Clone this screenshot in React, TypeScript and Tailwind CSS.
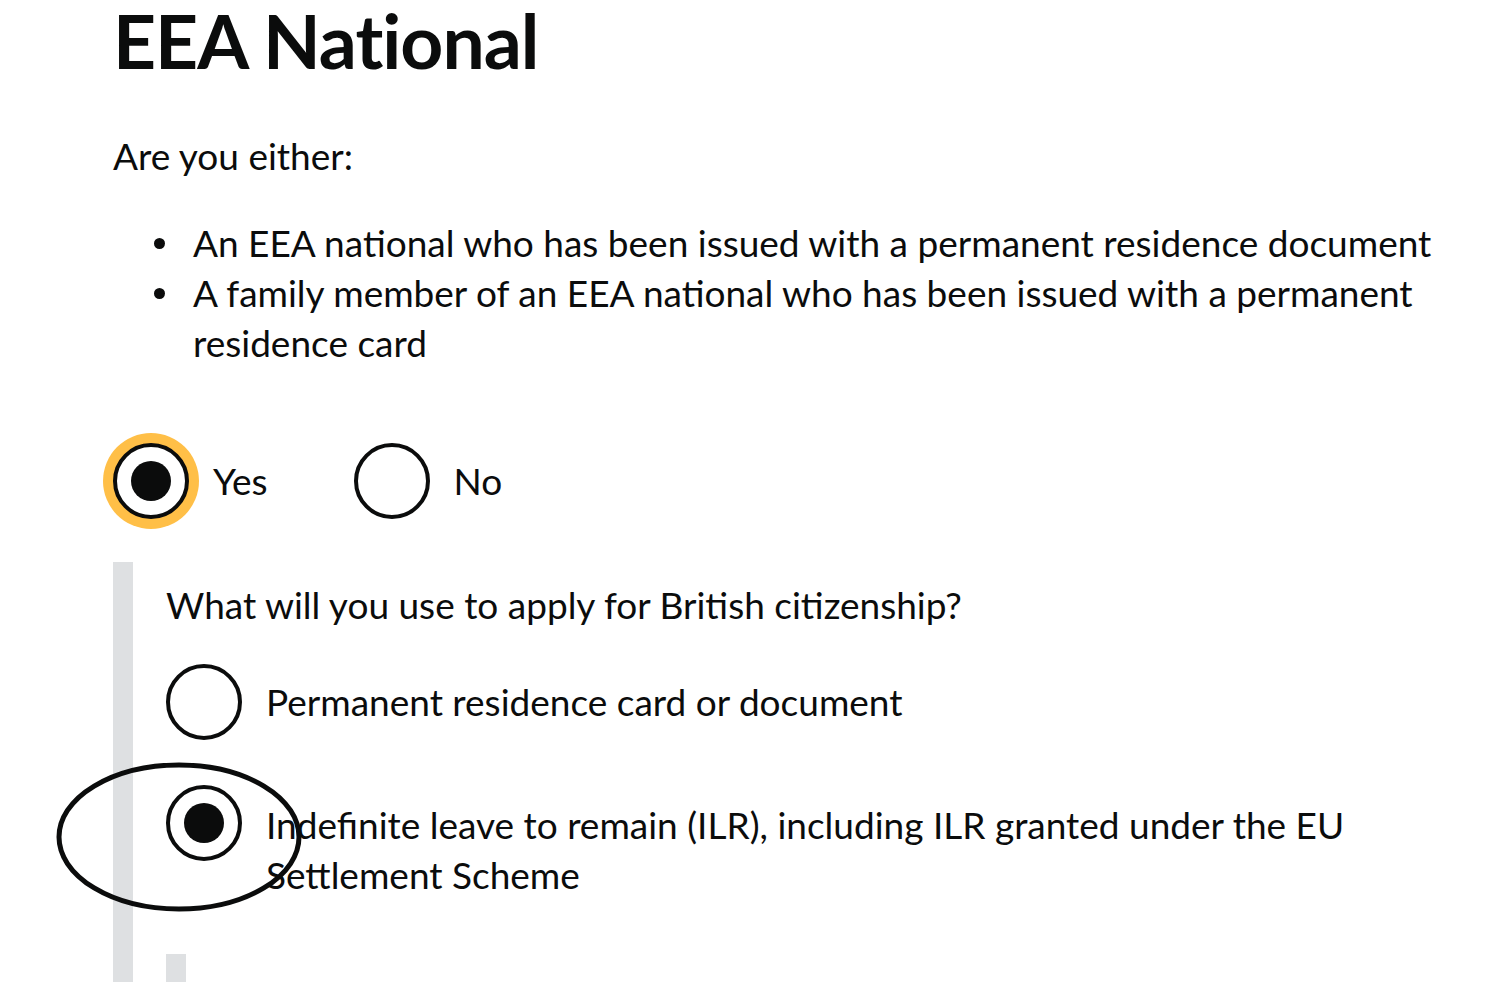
import React from 'react';

const font = { fontFamily: 'Lato, "Noto Sans", sans-serif' };

function Radio({ checked, focused }: { checked?: boolean; focused?: boolean }) {
  return (
    <span
      className={
        'relative flex h-[76px] w-[76px] shrink-0 items-center justify-center rounded-full border-[4px] border-[#0b0c0c] bg-white ' +
        (focused ? 'shadow-[0_0_0_10px_#ffbf47]' : '')
      }
    >
      {checked && <span className="h-[40px] w-[40px] rounded-full bg-[#0b0c0c]" />}
    </span>
  );
}

function Bullet({ children }: { children: React.ReactNode }) {
  return (
    <li className="flex">
      <span className="w-[80px] shrink-0">
        <span className="ml-[41px] mt-[20px] block h-[11px] w-[11px] rounded-full bg-[#0b0c0c]" />
      </span>
      <span>{children}</span>
    </li>
  );
}

export default function App() {
  return (
    <div className="h-[982px] overflow-hidden bg-white text-[#0b0c0c]" style={font}>
      <div className="pl-[113px] pr-[40px]">
        <h1 className="mt-[0px] text-[75px] font-bold leading-[80px] tracking-[-1px]">EEA National</h1>

        <p className="mt-[51px] text-[37px] leading-[50px]">Are you either:</p>

        <ul className="mt-[37px] text-[37px] leading-[50px]">
          <Bullet>An EEA national who has been issued with a permanent residence document</Bullet>
          <Bullet>A family member of an EEA national who has been issued with a permanent residence card</Bullet>
        </ul>

        <div className="mt-[75px] flex items-center">
          <label className="flex items-center">
            <Radio checked focused />
            <span className="ml-[24px] text-[37px]">Yes</span>
          </label>
          <label className="ml-[86px] flex items-center">
            <Radio />
            <span className="ml-[24px] text-[37px]">No</span>
          </label>
        </div>

        <div className="mt-[43px] border-l-[20px] border-[#dee0e2] pl-[33px] pt-[18px] pb-[40px]">
          <p className="text-[37px] leading-[50px]">What will you use to apply for British citizenship?</p>

          <div className="mt-[34px] flex items-center">
            <Radio />
            <span className="ml-[24px] text-[37px] leading-[50px]">Permanent residence card or document</span>
          </div>

          <div className="relative mt-[45px] flex items-start">
            <Radio checked />
            <span className="ml-[24px] max-w-[1120px] pt-[15px] text-[37px] leading-[50px]">
              Indefinite leave to remain (ILR), including ILR granted under the EU Settlement Scheme
            </span>
            <svg
              className="pointer-events-none absolute left-[-110px] top-[-24px]"
              width="250"
              height="152"
              viewBox="0 0 250 152"
            >
              <ellipse cx="123" cy="76" rx="120" ry="72" fill="none" stroke="#0b0c0c" strokeWidth="5" />
            </svg>
          </div>

          <div className="mt-[54px] h-[40px] w-[20px] bg-[#dee0e2]" />
        </div>
      </div>
    </div>
  );
}
